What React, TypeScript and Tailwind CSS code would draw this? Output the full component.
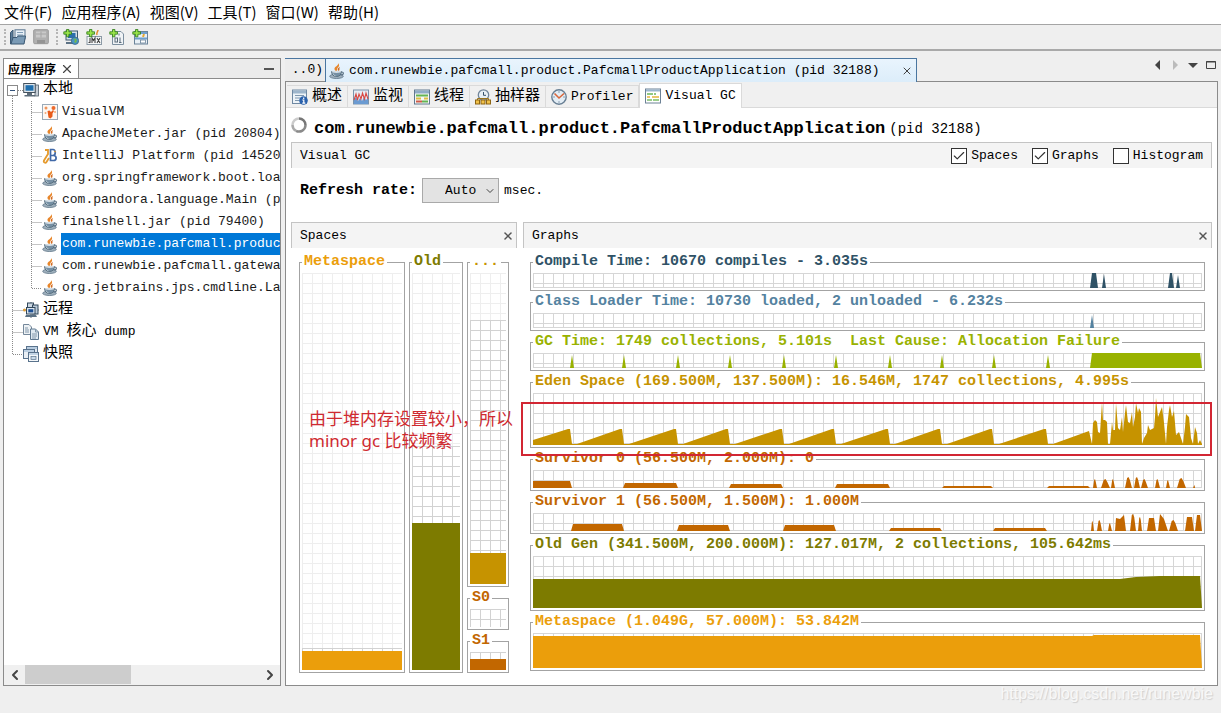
import type { ReactNode } from 'react';
import { Check, ChevronDown, ChevronLeft, ChevronRight, X } from 'lucide-react';

type IconProps = { className?: string };
type Point = [number, number];

const CHART_WIDTH = 669;

function JavaIcon({ className = 'size-4' }: IconProps) {
  return (
    <svg viewBox="0 0 16 16" className={className} aria-hidden="true">
      <path d="M9 0C10 3 5 3.5 5.500 6.200c.2 1 1.400 1.600 1.400 2.500C9.500 7.200 7.500 6 8.700 4.800 10.200 3.500 10.800 2 9 0z" fill="#e8862a" />
      <path d="M11 3.800C8.500 5.100 8.700 6 9.200 7c.3.7-.3 1.200-.6 1.500C12 7 9.500 6 11 3.800z" fill="#d0661c" />
      <ellipse cx="7.500" cy="13.300" rx="6.800" ry="2.200" fill="#9fb0bd" stroke="#5d7486" strokeWidth=".8" />
      <path d="M2.500 8.500h10c0 2.500-1.500 5-5 5s-5-2.500-5-5z" fill="#7690a4" stroke="#4c6475" strokeWidth=".8" />
      <ellipse cx="7.500" cy="8.800" rx="4.800" ry="1.100" fill="#d5dfe6" />
      <path d="M12.300 9.200c3-.6 3 2.800-.9 2.800" fill="none" stroke="#5d7486" strokeWidth="1.100" />
      <path d="M4 10.500c.5 1.500 1.500 2 2.500 2.300" fill="none" stroke="#c3d1db" />
    </svg>
  );
}

function VisualVmIcon({ className = 'size-4' }: IconProps) {
  return (
    <svg viewBox="0 0 16 16" className={className} aria-hidden="true">
      <rect x=".5" y=".5" width="15" height="15" fill="#fdf8f4" stroke="#9aaab8" />
      <circle cx="4" cy="4" r="1.500" fill="#f0945a" />
      <circle cx="11.500" cy="4" r="2" fill="#ec6a2c" />
      <path d="M5.500 7l2-.5L9 8l2-2 1 1-1.500 2.500v3l-2 2-2-1z" fill="#e85b1a" />
      <circle cx="13" cy="8" r="1" fill="#f3a877" />
      <circle cx="3.500" cy="9" r="1" fill="#f3a877" />
    </svg>
  );
}

function IntellijIcon({ className = 'size-4' }: IconProps) {
  return (
    <svg viewBox="0 0 16 16" className={className} aria-hidden="true" fill="none">
      <path d="M6 1v5.500M3 2h3.500M6 6L2 12.500c-1 2 1.500 3 2.500 1.500L7 10" stroke="#e59a2c" strokeWidth="1.800" />
      <path d="M8.500 1.500v11h3c3.500 0 3.500-5 0-5h-3 2.500c3 0 3-6 0-6z" stroke="#4169a8" strokeWidth="1.700" />
      <path d="M12 3l2 1" stroke="#e59a2c" />
    </svg>
  );
}

function HostIcon({ className = 'size-4' }: IconProps) {
  return (
    <svg viewBox="0 0 16 16" className={className} aria-hidden="true">
      <rect x="12" y="3" width="3.500" height="11" fill="#c6ced6" stroke="#4d5c69" strokeWidth=".8" />
      <rect x=".7" y="1.500" width="11.500" height="9" fill="#dfe6ec" stroke="#45525e" />
      <rect x="2.500" y="3.200" width="8" height="5.500" fill="#1f6fae" />
      <path d="M4 11h5v2h3v1.500H1.500V13H4z" fill="#5d6c79" />
    </svg>
  );
}

function RemoteIcon({ className = 'size-4' }: IconProps) {
  return (
    <svg viewBox="0 0 16 16" className={className} aria-hidden="true">
      <path d="M0 8h16M8 0v16" stroke="#7b8894" strokeWidth="1.200" />
      <circle cx="1.500" cy="8" r="1.500" fill="#e0a03c" />
      <rect x="4.500" y="1" width="6" height="4.500" fill="#cdd9e4" stroke="#32485c" />
      <rect x="9.500" y="3" width="5.500" height="9" fill="#b9c9d8" stroke="#32485c" />
      <rect x="3.500" y="5.500" width="8.500" height="6.500" fill="#dce6ef" stroke="#32485c" />
      <rect x="5.300" y="7.200" width="5" height="3.200" fill="#1d4f94" />
      <path d="M3 13h10l1 2H2z" fill="#5b7185" />
    </svg>
  );
}

function DumpIcon({ className = 'size-4' }: IconProps) {
  return (
    <svg viewBox="0 0 16 16" className={className} aria-hidden="true">
      <path d="M.5.500H6l2.500 2.500v7.500h-8z" fill="#eef2f5" stroke="#74879a" />
      <path d="M7.500 5h5l3 3v7.500h-8z" fill="#dfe9f1" stroke="#5f7890" />
      <path d="M12.500 5v3h3M2 4h3M2 6h4M2 8h4M9 10h5M9 12h5M9 14h4" stroke="#8398ab" fill="none" />
    </svg>
  );
}

function SnapshotIcon({ className = 'size-4' }: IconProps) {
  return (
    <svg viewBox="0 0 16 16" className={className} aria-hidden="true">
      <rect x="3.500" y=".5" width="11" height="8" fill="#dfe7ef" stroke="#59728c" />
      <rect x=".5" y="3.500" width="11" height="9" fill="#e9eff5" stroke="#59728c" />
      <rect x="5.500" y="6.500" width="10" height="9" fill="#f5f8fa" stroke="#59728c" />
      <path d="M1 5h10M4 2h10M6 8h9" stroke="#8fb0d0" />
      <rect x="8" y="10.500" width="5" height="3" fill="#c9d9e8" stroke="#59728c" strokeWidth=".7" />
    </svg>
  );
}

function OverviewIcon({ className = 'size-4' }: IconProps) {
  return (
    <svg viewBox="0 0 16 16" className={className} aria-hidden="true">
      <rect x=".5" y="1" width="14" height="13.500" fill="#edf3f8" stroke="#6f89a3" />
      <path d="M1 3h13" stroke="#9db5cb" strokeWidth="3" />
      <path d="M3 6.500h9M3 9h5M3 11.500h4" stroke="#7e97ae" />
      <circle cx="11.500" cy="11.500" r="4.300" fill="#2a61ac" />
      <path d="M11.700 8.500v1.500M10.300 11h1.500v3M10.300 14.200h3" stroke="#fff" strokeWidth="1.200" fill="none" />
    </svg>
  );
}

function MonitorIcon({ className = 'size-4' }: IconProps) {
  return (
    <svg viewBox="0 0 16 16" className={className} aria-hidden="true">
      <rect x=".5" y="1" width="15" height="14" fill="#e4edf5" stroke="#7a93ab" />
      <path d="M1 15V11l2-3 2 4 2-3 2 3 2-4 2 3 2-2v6z" fill="#6b9bd2" />
      <path d="M1 11l2-6 1.500 6L6 5l2 5 1.500-6 2 6L13 4l2 6" fill="none" stroke="#d94b45" strokeWidth="1.100" />
    </svg>
  );
}

function ThreadsIcon({ className = 'size-4' }: IconProps) {
  return (
    <svg viewBox="0 0 16 16" className={className} aria-hidden="true">
      <rect x=".5" y="1" width="15" height="14" fill="#f5f7f5" stroke="#61788f" />
      <path d="M1 3h14" stroke="#90acc7" strokeWidth="3" />
      <path d="M2 6.500h12" stroke="#65b553" strokeWidth="2" />
      <path d="M2 9.500h5M10 9.500h4" stroke="#dfbd43" strokeWidth="2" />
      <path d="M2 12.500h6" stroke="#d05a49" strokeWidth="2" />
      <path d="M8 12.500h6" stroke="#65b553" strokeWidth="2" />
    </svg>
  );
}

function SamplerIcon({ className = 'size-4' }: IconProps) {
  return (
    <svg viewBox="0 0 16 16" className={className} aria-hidden="true">
      <circle cx="8.500" cy="6" r="5.200" fill="#e8f0f6" stroke="#71859a" strokeWidth="1.300" />
      <path d="M8.500 3v3.300h2.500" fill="none" stroke="#37526c" />
      <path d="M2.500 11V9.500h11V11" fill="none" stroke="#9b741b" />
      <rect x=".5" y="11" width="4" height="4" fill="#f2c24a" stroke="#8d6512" />
      <rect x="6" y="11" width="4" height="4" fill="#f2c24a" stroke="#8d6512" />
      <rect x="11.500" y="11" width="4" height="4" fill="#f2c24a" stroke="#8d6512" />
    </svg>
  );
}

function ProfilerIcon({ className = 'size-4' }: IconProps) {
  return (
    <svg viewBox="0 0 16 16" className={className} aria-hidden="true">
      <circle cx="8" cy="8" r="7.200" fill="#e3edf5" stroke="#687f94" strokeWidth="1.400" />
      <path d="M8 2v2M8 12v2M2 8h2M12 8h2" stroke="#8ba0b3" />
      <path d="M3.500 4.500L8 9l5-4.500" fill="none" stroke="#d9663a" strokeWidth="1.600" />
    </svg>
  );
}

function VisualGcIcon({ className = 'size-4' }: IconProps) {
  return (
    <svg viewBox="0 0 16 16" className={className} aria-hidden="true">
      <rect x=".5" y="1" width="15" height="14" fill="#fff" stroke="#6d8296" />
      <path d="M1 2.500h14" stroke="#9bb6cf" strokeWidth="2" />
      <path d="M2 6h6M9 6h2" stroke="#6cb65a" strokeWidth="1.500" />
      <path d="M2 9h3M7 9h7" stroke="#e2b53d" strokeWidth="1.500" />
      <path d="M2 12h5M8 12h6" stroke="#79bd67" strokeWidth="1.500" />
    </svg>
  );
}

function AddBadge() {
  return <path d="M3.500.500h2.400v2.300h2.600v2.400H5.900v2.600H3.500V5.200H.8V2.800h2.700z" fill="#9be34a" stroke="#2c7a18" strokeWidth=".8" />;
}

function OpenIcon() {
  return (
    <svg viewBox="0 0 16 16" className="size-4" aria-hidden="true">
      <path d="M.5 3.500L3 1v12L.5 15z" fill="#5d7d9a" stroke="#3b5873" />
      <rect x="5" y=".8" width="10" height="9" fill="#e8f0f7" stroke="#5a7690" />
      <path d="M7 3.500h6M7 6h6" stroke="#7f9cb6" />
      <path d="M3 8.500h4l1-1.500h7.500l-1.500 8H1z" fill="#7a9ab5" stroke="#3b5873" />
    </svg>
  );
}

function SaveIcon() {
  return (
    <svg viewBox="0 0 16 16" className="size-4" aria-hidden="true">
      <rect x=".7" y=".7" width="14.600" height="14" rx="1" fill="#b0b0b0" stroke="#999" />
      <path d="M3 2.500h10v6H3z" fill="#c9c9c9" />
      <path d="M3 5h10M8 2.500v6" stroke="#a5a5a5" />
      <path d="M4 11h8v3.500H4z" fill="#949494" />
    </svg>
  );
}

function AddRemoteHostIcon() {
  return (
    <svg viewBox="0 0 16 16" className="size-4" aria-hidden="true">
      <rect x="3" y="2" width="11.500" height="9" fill="#d5e0e9" stroke="#405a72" />
      <rect x="5" y="4" width="7.500" height="5" fill="#2b6fae" />
      <path d="M3 13h8v2H3z" fill="#5d7285" />
      <circle cx="12" cy="11.800" r="3.700" fill="#4a93c4" stroke="#33617e" strokeWidth=".7" />
      <path d="M10 10l2 1-1 2 2 1 1-3-1.500-1.500z" fill="#72b94f" />
      <AddBadge />
    </svg>
  );
}

function AddJmxIcon() {
  return (
    <svg viewBox="0 0 16 16" className="size-4" aria-hidden="true">
      <rect x="1" y="7.500" width="14.500" height="8" fill="#f5f7f8" stroke="#8c9aa6" />
      <path d="M12 1c0 2-2 2.500-1 5" stroke="#e6892f" strokeWidth="1.500" fill="none" />
      <path d="M4 9v4.500H2.500M6 14V9l1.500 2.500L9 9v5M11 9l3 5M14 9l-3 5" fill="none" stroke="#444" strokeWidth="1.100" />
      <AddBadge />
    </svg>
  );
}

function AddDumpIcon() {
  return (
    <svg viewBox="0 0 16 16" className="size-4" aria-hidden="true">
      <path d="M3.500 2.500H12l2.500 2.500v10.500h-11z" fill="#f0f3f6" stroke="#7d8f9f" />
      <rect x="6" y="9" width="2.500" height="4" fill="none" stroke="#5b6b79" />
      <path d="M11 8.500V13M10 13.500h2.500M10 4.500v2" stroke="#5b6b79" />
      <AddBadge />
    </svg>
  );
}

function AddSnapshotIcon() {
  return (
    <svg viewBox="0 0 16 16" className="size-4" aria-hidden="true">
      <rect x="2.500" y="2.500" width="13" height="12.500" fill="#e9f0f6" stroke="#6a8399" />
      <path d="M8 4h7M3 9.500h12" stroke="#6ea0ce" strokeWidth="2" />
      <rect x="8.500" y="11" width="5" height="3" fill="#fff" stroke="#6a8399" strokeWidth=".8" />
      <path d="M12 5l-1 3" stroke="#e6a72f" strokeWidth="2" />
      <AddBadge />
    </svg>
  );
}

const MENUS = ['文件(F)', '应用程序(A)', '视图(V)', '工具(T)', '窗口(W)', '帮助(H)'];

function MenuBar() {
  return (
    <nav className="flex h-[25px] items-center gap-[9px] border-b border-[#a5a5a5] bg-white px-1 font-['Noto_Sans_CJK_SC',sans-serif] text-[15px] leading-6">
      {MENUS.map((menu) => (
        <button key={menu} type="button" className="whitespace-nowrap">
          {menu}
        </button>
      ))}
    </nav>
  );
}

function ToolButton({ label, children }: { label: string; children: ReactNode }) {
  return (
    <button type="button" aria-label={label} className="size-4">
      {children}
    </button>
  );
}

function Toolbar() {
  return (
    <div className="flex h-[26px] items-center border-b-2 border-[#a9a9a9] bg-[#efefef] px-1">
      <span className="h-4 border-l-2 border-dotted border-[#b5b5b5]" />
      <div className="flex gap-[7px] pr-[7px] pl-1">
        <ToolButton label="打开">
          <OpenIcon />
        </ToolButton>
        <ToolButton label="保存">
          <SaveIcon />
        </ToolButton>
      </div>
      <span className="h-4 border-l-2 border-dotted border-[#b5b5b5]" />
      <div className="flex gap-[7px] pl-[5px]">
        <ToolButton label="添加远程主机">
          <AddRemoteHostIcon />
        </ToolButton>
        <ToolButton label="添加 JMX 连接">
          <AddJmxIcon />
        </ToolButton>
        <ToolButton label="添加 VM 核心 dump">
          <AddDumpIcon />
        </ToolButton>
        <ToolButton label="添加快照">
          <AddSnapshotIcon />
        </ToolButton>
      </div>
    </div>
  );
}

const PROCESSES = [
  { name: 'VisualVM', Icon: VisualVmIcon },
  { name: 'ApacheJMeter.jar (pid 20804)', Icon: JavaIcon },
  { name: 'IntelliJ Platform (pid 14520)', Icon: IntellijIcon },
  { name: 'org.springframework.boot.loader.JarLauncher', Icon: JavaIcon },
  { name: 'com.pandora.language.Main (pid 8816)', Icon: JavaIcon },
  { name: 'finalshell.jar (pid 79400)', Icon: JavaIcon },
  { name: 'com.runewbie.pafcmall.product.PafcmallProductApplication', Icon: JavaIcon, selected: true },
  { name: 'com.runewbie.pafcmall.gateway.PafcmallGatewayApplication', Icon: JavaIcon },
  { name: 'org.jetbrains.jps.cmdline.Launcher', Icon: JavaIcon },
];

function Guide({ d, width }: { d: string; width: number }) {
  return (
    <svg width={width} height="22" className="shrink-0" aria-hidden="true">
      <path d={d} fill="none" stroke="#8a8a8a" strokeDasharray="1 1" />
    </svg>
  );
}

function RootRow({ icon, last, children }: { icon: ReactNode; last?: boolean; children: ReactNode }) {
  return (
    <li className="flex h-[22px] items-center">
      <Guide width={19} d={last ? 'M8.5 0V11.5H19' : 'M8.5 0V22M8.500 11.500H19'} />
      {icon}
      <span className="pl-1">{children}</span>
    </li>
  );
}

function Sidebar() {
  return (
    <aside className="flex w-[278px] shrink-0 flex-col border border-[#8b8b8b] bg-white">
      <div className="flex h-5 items-stretch justify-between border-b border-[#8b8b8b] bg-[#ebebeb]">
        <div className="flex items-center gap-1 border-r border-[#8b8b8b] bg-white px-1 font-['Noto_Sans_CJK_SC',sans-serif] text-[12px] leading-4 font-bold">
          应用程序
          <button type="button" aria-label="关闭">
            <X className="size-3.5 text-[#444]" />
          </button>
        </div>
        <button type="button" aria-label="最小化" className="px-1.5">
          <span className="block h-0.5 w-2.5 bg-[#555]" />
        </button>
      </div>

      <ul className="flex-1 overflow-hidden text-[13px] leading-[22px] whitespace-nowrap">
        <li>
          <div className="flex h-[22px] items-center">
            <svg width="19" height="22" className="shrink-0" aria-hidden="true">
              <path d="M8.500 17V22M14 11.500H19" fill="none" stroke="#8a8a8a" strokeDasharray="1 1" />
              <rect x="3.500" y="6.500" width="10" height="10" fill="#fff" stroke="#8a8a8a" />
              <path d="M6 11.500h5" stroke="#33527a" />
            </svg>
            <HostIcon />
            <span className="pl-1 text-[15px]">本地</span>
          </div>
          <ul>
            {PROCESSES.map(({ name, Icon, selected }, i) => (
              <li key={name} className="flex h-[22px] items-center">
                <Guide
                  width={38}
                  d={i === PROCESSES.length - 1 ? 'M8.5 0V22M27.500 0V11.500H38' : 'M8.5 0V22M27.500 0V22M27.500 11.500H38'}
                />
                <Icon className="size-4 shrink-0" />
                <span className={selected ? 'ml-[3px] flex-1 bg-[#0078d7] pl-px text-white' : 'pl-1 text-[#1a1a1a]'}>
                  {name}
                </span>
              </li>
            ))}
          </ul>
        </li>
        <RootRow icon={<RemoteIcon />}>
          <span className="text-[15px]">远程</span>
        </RootRow>
        <RootRow icon={<DumpIcon />}>
          VM <span className="text-[15px]">核心</span> dump
        </RootRow>
        <RootRow icon={<SnapshotIcon />} last>
          <span className="text-[15px]">快照</span>
        </RootRow>
      </ul>

      <div className="flex h-5 items-center bg-[#f0f0f0]">
        <button type="button" aria-label="向左滚动" className="flex w-[21px] justify-center">
          <ChevronLeft className="size-4 text-[#444]" strokeWidth={3} />
        </button>
        <div className="flex-1 self-stretch">
          <div className="h-[19px] w-[106px] bg-[#cdcdcd]" />
        </div>
        <button type="button" aria-label="向右滚动" className="flex w-[21px] justify-center">
          <ChevronRight className="size-4 text-[#444]" strokeWidth={3} />
        </button>
      </div>
    </aside>
  );
}

function EditorTabs() {
  return (
    <div className="flex h-[23px] text-[13px] leading-5 whitespace-nowrap">
      <button type="button" className="flex w-10 items-center justify-end border-t border-[#4a76a0] bg-[#ececec] pr-0.5">
        ..0)
      </button>
      <div className="relative -mb-px flex w-[592px] items-center gap-1 border border-b-0 border-[#4a76a0] bg-linear-to-b from-[#e9f4fd] to-[#dcedfa] pr-[3px] pl-[3px]">
        <JavaIcon />
        <button type="button" className="flex-1 text-left">
          com.runewbie.pafcmall.product.PafcmallProductApplication (pid 32188)
        </button>
        <button type="button" aria-label="关闭">
          <X className="size-3 text-[#444]" />
        </button>
      </div>
      <div className="flex flex-1 items-start justify-end gap-2 pt-0.5 pr-0.5">
        <button type="button" aria-label="上一个">
          <svg width="10" height="10">
            <path d="M8 0v10L3 5z" fill="#444" />
          </svg>
        </button>
        <button type="button" aria-label="下一个">
          <svg width="10" height="10">
            <path d="M3 0v10l5-5z" fill="#bbb" />
          </svg>
        </button>
        <button type="button" aria-label="文档列表">
          <svg width="10" height="10">
            <path d="M0 3h10L5 8z" fill="#444" />
          </svg>
        </button>
        <button type="button" aria-label="最大化">
          <svg width="10" height="10">
            <path d="M.5 1.500h9v7h-9zM0 2h10" fill="none" stroke="#444" />
          </svg>
        </button>
      </div>
    </div>
  );
}

const VIEWS = [
  { name: '概述', Icon: OverviewIcon, cjk: true },
  { name: '监视', Icon: MonitorIcon, cjk: true },
  { name: '线程', Icon: ThreadsIcon, cjk: true },
  { name: '抽样器', Icon: SamplerIcon, cjk: true },
  { name: 'Profiler', Icon: ProfilerIcon },
  { name: 'Visual GC', Icon: VisualGcIcon, active: true },
];

function ViewTabs() {
  return (
    <div className="flex h-[26px] items-end border-b border-[#dadada] bg-[#f0f0f0] pl-px whitespace-nowrap">
      {VIEWS.map(({ name, Icon, cjk, active }) => (
        <button
          key={name}
          type="button"
          className={
            active
              ? 'relative -mb-px flex h-[25px] items-center gap-1 border border-b-0 border-[#dadada] bg-white px-[5px] text-[13px]'
              : 'flex h-[22px] items-center gap-1 border-t border-r border-[#dadada] px-[5px] text-[13px]'
          }
        >
          <Icon />
          <span className={cjk ? 'text-[15px] leading-5' : 'leading-5'}>{name}</span>
        </button>
      ))}
    </div>
  );
}

function Toggle({ label, checked }: { label: string; checked?: boolean }) {
  return (
    <label className="flex items-center gap-1">
      <span className="grid">
        <input
          type="checkbox"
          defaultChecked={checked}
          className="peer col-start-1 row-start-1 size-4 appearance-none border border-[#333] bg-white"
        />
        <Check className="pointer-events-none invisible col-start-1 row-start-1 size-4 p-px text-[#333] peer-checked:visible" />
      </span>
      {label}
    </label>
  );
}

function PaneHeader({ title, children }: { title: string; children: ReactNode }) {
  return (
    <div className="flex h-[26px] items-center justify-between border border-b-0 border-[#c4c4c4] bg-[#f4f4f4] pl-2 text-[13px] leading-5">
      <h2>{title}</h2>
      {children}
    </div>
  );
}

function CloseButton() {
  return (
    <button type="button" aria-label="关闭" className="pr-0.5">
      <X className="size-3 text-[#555]" strokeWidth={3} />
    </button>
  );
}

function SpaceBox({
  title,
  color,
  bar,
  parts,
  className,
}: {
  title: string;
  color: string;
  bar: string;
  // reserved, committed and used share of the space
  parts: [number, number, number];
  className: string;
}) {
  const [reserved, committed, used] = parts;

  return (
    <fieldset className={`flex min-w-0 flex-col border border-[#a3a3a3] p-0.5 ${className}`}>
      <legend className={`px-0.5 text-[15px] leading-[18px] font-bold ${color}`}>{title}</legend>
      <div className="flex min-h-[18px] flex-1 flex-col">
        <div
          className="basis-0 bg-[linear-gradient(#eeeeee_1px,transparent_1px),linear-gradient(90deg,#eeeeee_1px,transparent_1px)] bg-[size:10px_10px]"
          style={{ flexGrow: reserved }}
        />
        <div
          className="basis-0 bg-[linear-gradient(#d2d2d2_1px,transparent_1px),linear-gradient(90deg,#d2d2d2_1px,transparent_1px)] bg-[size:10px_10px]"
          style={{ flexGrow: committed }}
        />
        <div className={`basis-0 ${bar}`} style={{ flexGrow: used }} />
      </div>
    </fieldset>
  );
}

function SpacesPane() {
  return (
    <section className="flex w-[226px] shrink-0 flex-col">
      <PaneHeader title="Spaces">
        <CloseButton />
      </PaneHeader>
      <div className="relative flex flex-1 gap-1 pt-[5px] pl-2">
        <SpaceBox
          title="Metaspace"
          color="text-[#eb9e0b]"
          bar="bg-[#eb9e0b]"
          parts={[375, 3, 19]}
          className="w-[106px]"
        />
        <SpaceBox title="Old" color="text-[#7d7b00]" bar="bg-[#7d7b00]" parts={[173, 77, 147]} className="w-[54px]" />
        <div className="flex w-[42px] flex-col gap-0.5">
          <SpaceBox title="..." color="text-[#c69300]" bar="bg-[#c69300]" parts={[47, 233, 31]} className="flex-1" />
          <SpaceBox title="S0" color="text-[#c26700]" bar="bg-[#c26700]" parts={[0, 18, 0]} className="shrink-0" />
          <SpaceBox title="S1" color="text-[#c26700]" bar="bg-[#c26700]" parts={[0, 7, 11]} className="shrink-0" />
        </div>
        <p className="absolute top-[160px] left-[18px] z-10 font-['Noto_Sans','Noto_Sans_CJK_SC',sans-serif] text-[17px] leading-[22px] whitespace-nowrap text-[#cf2a30]">
          由于堆内存设置较小，所以
          <br />
          minor gc 比较频繁
        </p>
      </div>
    </section>
  );
}

const COLLECTIONS = [39, 91, 145, 197, 251, 303, 357, 409, 461, 515];

// flat topped block with sloped sides
function block(from: number, to: number, top: number, base: number): Point[] {
  return [
    [from, base],
    [from + 2, top],
    [to - 2, top],
    [to, base],
  ];
}

function hump(from: number, to: number, top: number, base: number): Point[] {
  const w = to - from;
  return [
    [from, base],
    [from + w * 0.3, top + 1],
    [from + w * 0.5, top],
    [from + w * 0.7, top + 3],
    [to, base],
  ];
}

const EDEN_BURST: Point[] = [
  [559, 51], [560, 30], [562, 27], [564, 29], [565, 39], [567, 40], [569, 9], [570, 27], [572, 27], [574, 29],
  [575, 51], [577, 51], [579, 29], [580, 37], [582, 37], [583, 10], [585, 35], [587, 37], [589, 24], [590, 39],
  [592, 20], [593, 12], [595, 29], [597, 30], [599, 19], [600, 34], [602, 24], [603, 10], [605, 20], [606, 15],
  [608, 19], [609, 51], [611, 45], [614, 40], [615, 32], [617, 37], [621, 35], [622, 24], [623, 5], [625, 24],
  [627, 19], [629, 14], [631, 30], [633, 51], [634, 34], [636, 17], [637, 12], [639, 24], [641, 18], [643, 42],
  [646, 39], [648, 45], [650, 51], [652, 34], [653, 21], [656, 24], [658, 45], [660, 51], [662, 34], [664, 40],
  [665, 51], [667, 47], [669, 51],
];

const EDEN: Point[] = [
  [0, 47],
  ...COLLECTIONS.flatMap((x): Point[] => [
    [x - 4, 36],
    [x - 2, 36],
    [x, 51],
    [x + 5, 51],
  ]),
  [556, 38],
  ...EDEN_BURST,
];

const SURVIVOR_0: Point[] = [
  [0, 11],
  [37, 11],
  [39, 18],
  ...block(90, 145, 13, 18),
  ...block(196, 250, 14, 18),
  ...block(302, 357, 14, 18),
  ...block(409, 460, 16, 18),
  ...block(514, 557, 16, 18),
  ...hump(560, 564, 9, 18),
  ...hump(568, 577, 9, 18),
  ...hump(578, 582, 9, 18),
  ...hump(592, 599, 7, 18),
  ...hump(601, 607, 7, 18),
  ...hump(608, 615, 9, 18),
  ...hump(622, 627, 9, 18),
  ...hump(633, 637, 10, 18),
  ...hump(644, 653, 8, 18),
  ...hump(660, 663, 15, 18),
];

const SURVIVOR_1: Point[] = [
  ...block(38, 91, 11, 18),
  ...block(144, 197, 12, 18),
  ...block(250, 303, 12, 18),
  ...block(356, 409, 15, 18),
  ...block(460, 514, 15, 18),
  ...hump(558, 561, 8, 18),
  ...hump(564, 569, 7, 18),
  ...hump(575, 579, 10, 18),
  [582, 18], [583, 5], [587, 6], [591, 2], [593, 18],
  ...hump(597, 603, 1, 18),
  ...hump(605, 609, 4, 18),
  ...block(614, 623, 5, 18),
  [625, 18], [627, 1], [631, 6], [635, 18],
  ...hump(636, 645, 7, 18),
  ...block(652, 661, 4, 18),
  ...block(662, 669, 2, 18),
];

const GRAPHS: { title: string; color: string; height: number; box: string; points: Point[] }[] = [
  {
    title: 'Compile Time: 10670 compiles - 3.035s',
    color: 'text-[#2f5266]',
    height: 15,
    box: 'h-[15px]',
    points: [...block(557, 565, 0, 15), [569, 15], [571, 1], [573, 15], ...block(635, 641, 0, 15), [643, 15], [645, 2], [647, 15]],
  },
  {
    title: 'Class Loader Time: 10730 loaded, 2 unloaded - 6.232s',
    color: 'text-[#5482a0]',
    height: 15,
    box: 'h-[15px]',
    points: [[557, 15], [559, 2], [561, 15]],
  },
  {
    title: 'GC Time: 1749 collections, 5.101s  Last Cause: Allocation Failure',
    color: 'text-[#99b200]',
    height: 15,
    box: 'h-[15px]',
    points: [
      ...COLLECTIONS.flatMap((x): Point[] => [
        [x - 2, 15],
        [x, 2],
        [x + 2, 15],
      ]),
      ...block(557, 669, 0, 15),
    ],
  },
  {
    title: 'Eden Space (169.500M, 137.500M): 16.546M, 1747 collections, 4.995s',
    color: 'text-[#c69300]',
    height: 52,
    box: 'h-[52px]',
    points: EDEN,
  },
  {
    title: 'Survivor 0 (56.500M, 2.000M): 0',
    color: 'text-[#c26700]',
    height: 18,
    box: 'h-[18px]',
    points: SURVIVOR_0,
  },
  {
    title: 'Survivor 1 (56.500M, 1.500M): 1.000M',
    color: 'text-[#c26700]',
    height: 18,
    box: 'h-[18px]',
    points: SURVIVOR_1,
  },
  {
    title: 'Old Gen (341.500M, 200.000M): 127.017M, 2 collections, 105.642ms',
    color: 'text-[#7d7b00]',
    height: 52,
    box: 'h-[52px]',
    points: [[0, 23], [587, 23], [603, 21], [627, 20], [667, 20], [669, 52]],
  },
  {
    title: 'Metaspace (1.049G, 57.000M): 53.842M',
    color: 'text-[#eb9e0b]',
    height: 35,
    box: 'h-[35px]',
    points: [[0, 3], [559, 3], [561, 2], [667, 2], [669, 35]],
  },
];

function gridPath(height: number) {
  let d = '';
  for (let x = 0; x < CHART_WIDTH; x += 10) d += `M${x + 0.5} 0V${height}`;
  for (let y = 0; y < height; y += 10) d += `M0 ${y + 0.5}H${CHART_WIDTH}`;
  return `${d}M0 ${height - 0.5}H${CHART_WIDTH}M${CHART_WIDTH - 0.5} 0V${height}`;
}

function GraphsPane() {
  return (
    <section className="flex min-w-0 flex-1 flex-col">
      <PaneHeader title="Graphs">
        <CloseButton />
      </PaneHeader>
      <div className="relative flex flex-col gap-0.5 px-[7px] pt-[5px] pb-0.5">
        {GRAPHS.map(({ title, color, height, box, points }) => (
          <fieldset key={title} className={`min-w-0 border border-[#a3a3a3] p-0.5 ${color}`}>
            <legend className="px-0.5 text-[15px] leading-[18px] font-bold whitespace-pre">{title}</legend>
            <svg viewBox={`0 0 ${CHART_WIDTH} ${height}`} preserveAspectRatio="none" className={`block w-full ${box}`}>
              <path d={gridPath(height)} fill="none" stroke="#d6d6d6" />
              <path d={`M0 ${height}L${points.map((p) => p.join(' ')).join('L')}V${height}z`} fill="currentColor" />
            </svg>
          </fieldset>
        ))}
        <div className="pointer-events-none absolute top-[154px] right-0 -left-0.5 h-[54px] border-2 border-[#d22633]" />
      </div>
    </section>
  );
}

function VisualGcView() {
  return (
    <div className="flex flex-1 flex-col px-[5px] pb-3">
      <div className="flex h-[34px] items-center gap-[7px] whitespace-nowrap">
        <svg viewBox="0 0 16 16" className="size-4" fill="none" strokeWidth="2.500" aria-hidden="true">
          <path d="M8 1.500A6.500 6.500 0 0 1 14.500 8" stroke="#777" />
          <path d="M14.500 8A6.500 6.500 0 0 1 5 13.800" stroke="#8a8a8a" />
          <path d="M5 13.800A6.500 6.500 0 0 1 1.500 8" stroke="#aaa" />
          <path d="M1.500 8A6.500 6.500 0 0 1 8 1.500" stroke="#ccc" />
        </svg>
        <h1 className="pt-2 text-[17px] leading-6 font-bold">
          com.runewbie.pafcmall.product.PafcmallProductApplication
          <span className="pl-1 text-[14px] font-normal">(pid 32188)</span>
        </h1>
      </div>

      <PaneHeader title="Visual GC">
        <div className="flex gap-3.5 pr-2">
          <Toggle label="Spaces" checked />
          <Toggle label="Graphs" checked />
          <Toggle label="Histogram" />
        </div>
      </PaneHeader>

      <div className="flex items-center gap-[5px] pt-2.5 pb-[19px] pl-[9px] text-[13px] leading-5">
        <label htmlFor="rate" className="text-[15px] font-bold">
          Refresh rate:
        </label>
        <span className="grid items-center">
          <select
            id="rate"
            className="col-start-1 row-start-1 h-[25px] w-[77px] appearance-none border border-[#a9a9a9] bg-[#e3e3e3] pl-[22px]"
          >
            <option>Auto</option>
            <option>100</option>
            <option>500</option>
            <option>1000</option>
          </select>
          <ChevronDown className="pointer-events-none col-start-1 row-start-1 mr-[3px] size-3 justify-self-end text-[#444]" />
        </span>
        msec.
      </div>

      <div className="flex flex-1 gap-1.5">
        <SpacesPane />
        <GraphsPane />
      </div>
    </div>
  );
}

export default function App() {
  return (
    <div className="flex min-h-screen flex-col bg-[#efefef] font-['Liberation_Mono','Noto_Sans_CJK_SC',monospace] text-black">
      <MenuBar />
      <Toolbar />
      <main className="flex flex-1 gap-1 px-[3px] pt-[7px]">
        <Sidebar />
        <div className="flex min-w-0 flex-1 flex-col">
          <EditorTabs />
          <div className="flex flex-1 flex-col border border-[#8b8b8b] bg-white">
            <ViewTabs />
            <VisualGcView />
          </div>
        </div>
      </main>
      <footer className="h-[27px] pr-2 text-right font-['Liberation_Sans',sans-serif] text-[16px] leading-4 text-[#f8f8f8] [text-shadow:1px_1px_1px_#cfcfcf]">
        https://blog.csdn.net/runewbie
      </footer>
    </div>
  );
}
